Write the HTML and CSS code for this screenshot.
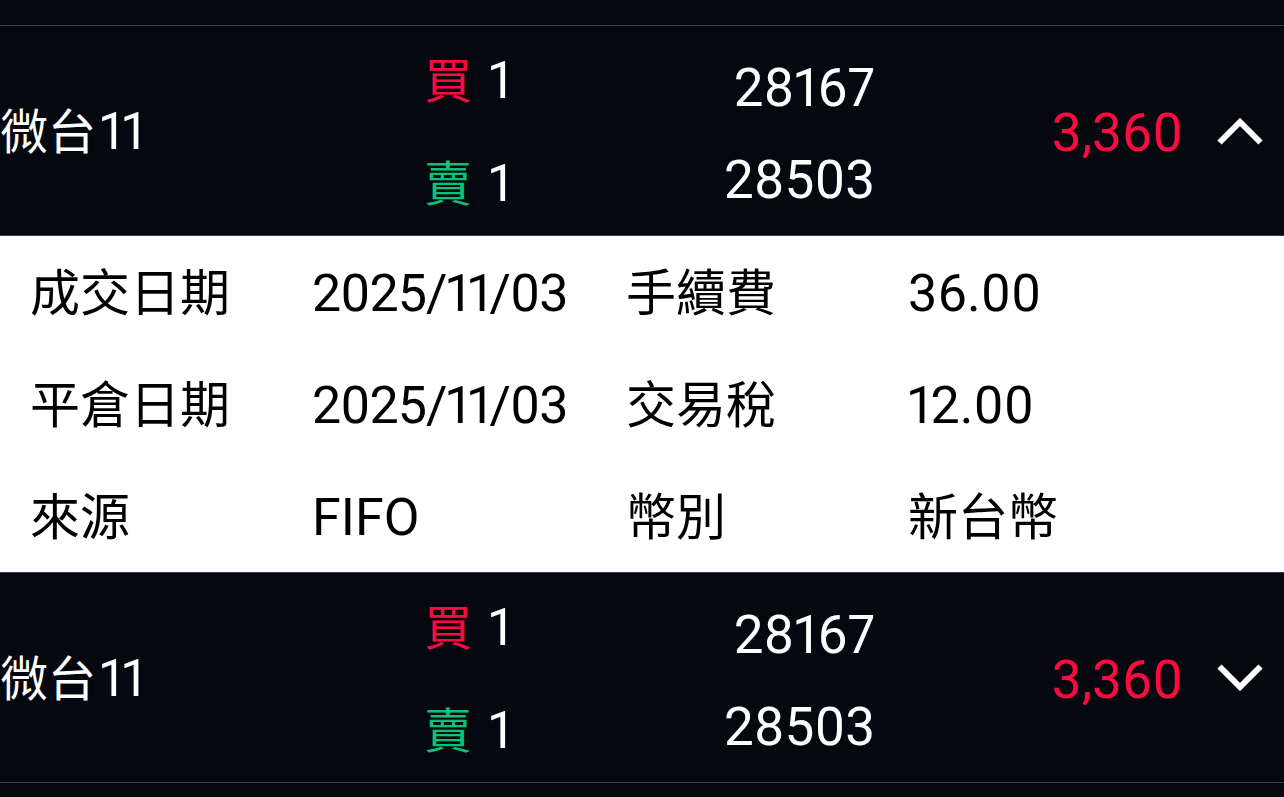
FILE: index.html
```html
<!DOCTYPE html>
<html lang="zh-Hant">
<head>
<meta charset="utf-8">
<title>交易明細</title>
<link rel="stylesheet" href="styles.css">
</head>
<body>
<div class="list">
  <div class="spacer"></div>

  <div class="trade">
    <div class="name">微台<span class="code">11</span></div>
    <div class="sides">
      <div class="side"><span class="buy">買</span><span class="num">1</span></div>
      <div class="side"><span class="sell">賣</span><span class="num">1</span></div>
    </div>
    <div class="prices">
      <div class="price">28167</div>
      <div class="price">28503</div>
    </div>
    <div class="pnl">3,360</div>
    <div class="toggle">
      <svg class="chev" width="46" height="28" viewBox="0 0 46 28"><path d="M2.5 25.5 L23 5 L43.5 25.5" fill="none" stroke="#fff" stroke-width="6"/></svg>
    </div>
  </div>

  <div class="details">
    <div class="label">成交日期</div>
    <div class="value date">2025/11/03</div>
    <div class="label">手續費</div>
    <div class="value">36.00</div>

    <div class="label">平倉日期</div>
    <div class="value date">2025/11/03</div>
    <div class="label">交易稅</div>
    <div class="value">12.00</div>

    <div class="label">來源</div>
    <div class="value">FIFO</div>
    <div class="label">幣別</div>
    <div class="value cjk">新台幣</div>
  </div>

  <div class="trade">
    <div class="name">微台<span class="code">11</span></div>
    <div class="sides">
      <div class="side"><span class="buy">買</span><span class="num">1</span></div>
      <div class="side"><span class="sell">賣</span><span class="num">1</span></div>
    </div>
    <div class="prices">
      <div class="price">28167</div>
      <div class="price">28503</div>
    </div>
    <div class="pnl">3,360</div>
    <div class="toggle">
      <svg class="chev" width="46" height="28" viewBox="0 0 46 28"><path d="M2.5 2.5 L23 23 L43.5 2.5" fill="none" stroke="#fff" stroke-width="6"/></svg>
    </div>
  </div>
</div>
</body>
</html>
```

FILE: styles.css
```css
html, body {
  margin: 0;
  padding: 0;
  background: #05090f;
}

body {
  width: 1284px;
  height: 797px;
  overflow: hidden;
  font-family: "Roboto", "Noto Sans CJK TC", sans-serif;
  font-variant-numeric: proportional-nums;
}

.spacer {
  height: 25px;
}

.trade {
  display: flex;
  align-items: center;
  height: 209px;
  border-top: 1px solid #34404e;
  border-bottom: 1px solid #34404e;
  color: #fff;
}

.name {
  width: 424px;
  font-size: 48px;
  line-height: 56px;
  white-space: nowrap;
  margin-top: 3px;
}

.name .code {
  font-size: 51px;
  margin-left: 4px;
}

.sides {
  width: 200px;
  display: flex;
  flex-direction: column;
  gap: 46px;
  margin-top: 4px;
}

.side {
  font-size: 48px;
  line-height: 56px;
  white-space: nowrap;
}

.side .num {
  font-size: 51px;
  margin-left: 17px;
}

.buy {
  color: #ff0a40;
}

.sell {
  color: #05c477;
}

.prices {
  width: 251px;
  display: flex;
  flex-direction: column;
  gap: 36px;
  text-align: right;
  margin-top: 6px;
}

.price {
  font-size: 53px;
  line-height: 56px;
}

.pnl {
  flex: 1;
  text-align: right;
  font-size: 53px;
  line-height: 56px;
  color: #ff0a40;
  margin-top: 5px;
}

.toggle {
  width: 101px;
  box-sizing: border-box;
  padding-left: 34px;
  display: flex;
  align-items: center;
}

.chev {
  display: block;
}

.details {
  background: #fff;
  color: #000;
  display: grid;
  grid-template-columns: 282px 314px 282px 1fr;
  grid-auto-rows: 112px;
  align-items: center;
  padding-left: 30px;
}

.label {
  font-size: 50px;
  line-height: 60px;
  white-space: nowrap;
  padding-top: 4px;
}

.value {
  font-size: 52px;
  line-height: 60px;
  white-space: nowrap;
  padding-top: 4px;
}

.value.date {
  letter-spacing: -1px;
}

.value.cjk {
  font-size: 50px;
}
```
